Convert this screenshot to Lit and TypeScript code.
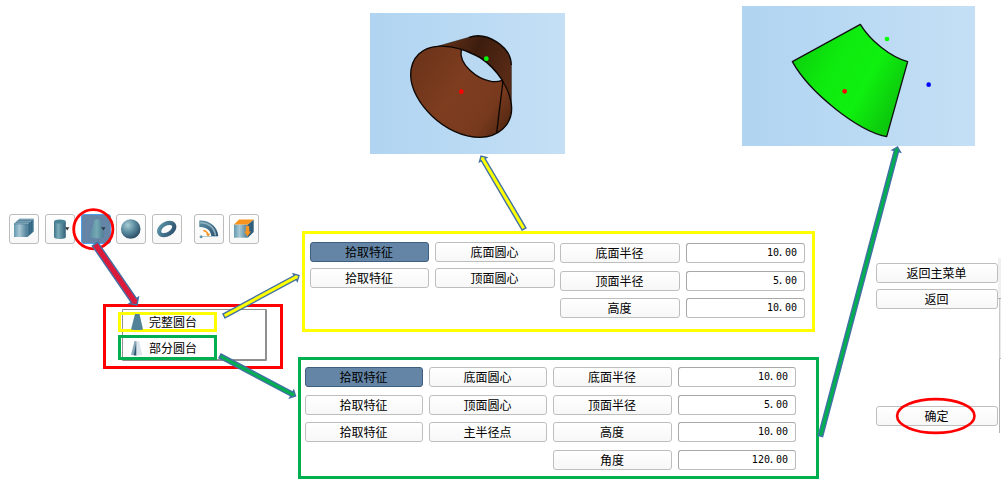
import { LitElement, html, css, svg } from "lit";
import { customElement, property } from "lit/decorators.js";

type Cell = { text: string; kind?: "active" | "value" };

/** Outline of a block arrow that runs from (x1,y1) to the tip (x2,y2). */
function arrowPoints(x1: number, y1: number, x2: number, y2: number, half: number, head: number): string {
  const len = Math.hypot(x2 - x1, y2 - y1);
  const ux = (x2 - x1) / len;
  const uy = (y2 - y1) / len;
  const at = (along: number, side: number) =>
    `${(x1 + ux * along - uy * side).toFixed(2)},${(y1 + uy * along + ux * side).toFixed(2)}`;
  const neck = len - head;
  return [at(0, half), at(neck, half), at(neck, head), at(len, 0), at(neck, -head), at(neck, -half), at(0, -half)].join(" ");
}

const icons: Record<string, unknown> = {
  box: svg`<path d="M5 10L10.5 5H24.7L18.5 10Z" fill="#8db4c5"/><path d="M5 10H18.5V23H5Z" fill="url(#g-light)"/><path d="M18.5 10L24.7 5V17.5L18.5 23Z" fill="#3f7590"/><path d="M7 8.2H20.7V20.8M9 6.6H22.6V19" fill="none" stroke="#2d5a76" stroke-width=".6"/><path d="M5 10H18.5V23M5 10L10.5 5H24.7" fill="none" stroke="#4a7a94" stroke-width=".6"/>`,
  cylinder: svg`<path d="M9 7.5V23C9 25.6 20.8 25.6 20.8 23V7.5Z" fill="url(#g-body)"/><ellipse cx="14.9" cy="7.5" rx="5.9" ry="2" fill="#4a8296"/><path d="M20 13.3H24.4L22.2 16.5Z" fill="#333"/>`,
  cone: svg`<path d="M13.5 5.8Q16.2 4.6 19 5.8L22.8 23Q16 25.6 9 23Z" fill="url(#g-cone)"/><path d="M20 13.3H24.6L22.4 16.5Z" fill="#2b3d4d"/>`,
  sphere: svg`<circle cx="14.7" cy="15" r="9.8" fill="url(#g-ball)"/>`,
  torus: svg`<g transform="rotate(-31 14.7 15)"><ellipse cx="14.7" cy="15" rx="8.2" ry="5.3" fill="none" stroke="url(#g-ring)" stroke-width="4.2"/></g>`,
  pipe: svg`<path d="M5.3 6.5C15 6 23.5 12 24.3 22H17.3C17 16.5 12 12.6 5.3 13Z" fill="url(#g-ring)"/><path d="M6 8.8C14 8.5 20.3 13 21.5 21.5" fill="none" stroke="#8fb0bf" stroke-width="1.6"/><path d="M9.3 16.4Q13.3 17 14.2 21" fill="none" stroke="#f7931e" stroke-width="1.5"/><path d="M12 19.8H16.2L14.2 22.8Z" fill="#f7931e"/><path d="M8 22.5H24" stroke="#9fbccb" stroke-width=".8"/><circle cx="7.1" cy="22.8" r="1.5" fill="#6798b3"/>`,
  extrude: svg`<path d="M5 10.5H18.8V23.7H5Z" fill="url(#g-light)"/><path d="M18.8 10.5L24.7 5.5V18L18.8 23.7Z" fill="#315f7b"/><path d="M5 10.5L10 5.5H24.7L18.8 10.5Z" fill="#f7931e"/><path d="M16.8 12H20.2V17.5H21.8L18.5 22.5L15.2 17.5H16.8Z" fill="#f7931e"/>`,
};

const gradients = svg`<defs>
  <linearGradient id="g-light"><stop offset="0" stop-color="#6399b1"/><stop offset=".4" stop-color="#a9c8d4"/><stop offset="1" stop-color="#477b94"/></linearGradient>
  <linearGradient id="g-body"><stop offset="0" stop-color="#3f7188"/><stop offset=".35" stop-color="#7badba"/><stop offset="1" stop-color="#315f78"/></linearGradient>
  <linearGradient id="g-cone"><stop offset="0" stop-color="#5a8fa2"/><stop offset=".5" stop-color="#76a9b4"/><stop offset="1" stop-color="#487c92"/></linearGradient>
  <linearGradient id="g-ring" x1="0" y1="0" x2="1" y2="1"><stop offset="0" stop-color="#5b93a8"/><stop offset="1" stop-color="#2d506f"/></linearGradient>
  <radialGradient id="g-ball" cx=".35" cy=".3" r=".75"><stop offset="0" stop-color="#a8ccd5"/><stop offset=".5" stop-color="#5b8b9f"/><stop offset="1" stop-color="#284962"/></radialGradient>
</defs>`;

@customElement("cad-button")
class CadButton extends LitElement {
  @property() kind = "";
  @property() text = "";

  static styles = css`
    :host { display: block; height: 20px; }
    .face {
      box-sizing: border-box; height: 20px; display: flex; align-items: center; justify-content: center;
      border: 1px solid #bebebe; border-radius: 3px; background: linear-gradient(#fff, #f7f7f7);
      font: 12px/18px "Noto Sans CJK SC", sans-serif; color: #000; white-space: nowrap; padding-right: 1px;
    }
    .active { background: #6485a6; border-color: #3f5f80; }
    .value {
      justify-content: flex-end; padding-right: 7px; background: #fff; border-color: #a8a8a8 #bdbdbd #bdbdbd #a8a8a8;
      font: 10px/18px "DejaVu Sans Mono", monospace;
    }
    .dot { margin: 0 1.5px 0 -1.5px; }
  `;

  render() {
    if (this.kind === "value") {
      const [whole, frac] = this.text.split(".");
      return html`<div class="face value"><span>${whole}</span><span class="dot">.</span><span>${frac}</span></div>`;
    }
    return html`<div class="face ${this.kind}">${this.text}</div>`;
  }
}

@customElement("tool-bar")
class ToolBar extends LitElement {
  static styles = css`
    :host { display: block; }
    .bar { display: flex; gap: 5.8px; }
    .tool {
      box-sizing: border-box; width: 30px; height: 30px; border: 1px solid #bcbcbc; border-radius: 3px;
      background: linear-gradient(#fff, #f8f8f8);
    }
    .tool svg { display: block; margin: -1px; }
    .selected { background: #6485a6; border-color: #4aa0ec; }
    .apart { margin-left: 5.7px; }
  `;
  render() {
    return html`<div class="bar">
      ${["box", "cylinder", "cone", "sphere", "torus", "pipe", "extrude"].map(
        (n) => html`<div class="tool ${n === "cone" ? "selected" : ""} ${n === "pipe" ? "apart" : ""}">
          <svg width="30" height="30" viewBox="0 0 30 30">${gradients}${icons[n]}</svg>
        </div>`
      )}
    </div>`;
  }
}

@customElement("app-root")
class AppRoot extends LitElement {
  static styles = css`
    :host { display: block; }
    .canvas { position: relative; width: 1008px; height: 486px; background: #fff; overflow: hidden; }
    .node { position: absolute; box-sizing: border-box; }
    .scene { background: linear-gradient(90deg, #b0d4f1, #c4dff5); }
    .scene svg { display: block; width: 100%; height: 100%; }
    .scene-full { left: 370px; top: 13px; width: 195px; height: 141px; }
    .scene-part { left: 742px; top: 6px; width: 233px; height: 140px; }
    .tools { left: 9px; top: 214px; }
    .menu { left: 103px; top: 304px; width: 180px; height: 65px; border: 3px solid #f00; padding: 2px 13px 5px 15px; }
    .list {
      box-sizing: border-box; width: 145px; height: 52px; border: solid #909090; border-width: 1px 2px 2px 1px;
      margin-left: 1px; padding: 2px 0; display: flex; flex-direction: column; gap: 3px; border-radius: 1px;
    }
    .item {
      box-sizing: border-box; width: 99px; height: 20px; margin-left: -5px; padding-left: 8px; border: 3px solid #ff0;
      display: flex; align-items: center; gap: 4px; font: 12px/14px "Noto Sans CJK SC", sans-serif; color: #000; flex: none;
    }
    .item svg { width: 16px; height: 16px; flex: none; }
    .item.part { border-color: #00b050; height: 25px; }
    .panel { display: flex; }
    .panel-full { left: 302px; top: 231px; width: 513px; height: 101px; border: 3px solid #ff0; padding: 8px 7px 0 5px; gap: 5px; }
    .panel-part { left: 298px; top: 357px; width: 521px; height: 122px; border: 3px solid #00b050; padding: 7px 20px 0 4px; }
    .grid { display: grid; align-content: start; }
    .picks { grid-template-columns: 119px 120px; gap: 5.5px 6px; }
    .sizes { grid-template-columns: 120px 119px; gap: 7.5px 6px; padding-top: 1px; }
    .part-grid { grid-template-columns: 118px 118px 119px 118px; gap: 7.7px 6px; }
    .side { left: 876px; top: 263px; width: 122px; height: 163px; display: flex; flex-direction: column; gap: 6px; }
    .last { margin-top: auto; }
    .edge { left: 998px; top: 258px; width: 3px; height: 175px; display: flex; flex-direction: column; }
    .e1 { height: 40px; background: #f0f0f0; border-bottom: 1px solid #b0b0b0; }
    .e2 { height: 59px; background: #e9e9e9; border-left: 1px solid #c8c8c8; border-bottom: 1px solid #bbb; margin-left: 1px; }
    .e3 { flex: 1; width: 1px; margin-left: 1px; background: #b4b4b4; }
    .marks { left: 0; top: 0; }
  `;

  fullPicks: Cell[] = [
    { text: "拾取特征", kind: "active" }, { text: "底面圆心" },
    { text: "拾取特征" }, { text: "顶面圆心" },
  ];
  fullSizes: Cell[] = [
    { text: "底面半径" }, { text: "10.00", kind: "value" },
    { text: "顶面半径" }, { text: "5.00", kind: "value" },
    { text: "高度" }, { text: "10.00", kind: "value" },
  ];
  partCells: (Cell | null)[] = [
    { text: "拾取特征", kind: "active" }, { text: "底面圆心" }, { text: "底面半径" }, { text: "10.00", kind: "value" },
    { text: "拾取特征" }, { text: "顶面圆心" }, { text: "顶面半径" }, { text: "5.00", kind: "value" },
    { text: "拾取特征" }, { text: "主半径点" }, { text: "高度" }, { text: "10.00", kind: "value" },
    null, null, { text: "角度" }, { text: "120.00", kind: "value" },
  ];

  cells(list: (Cell | null)[]) {
    return list.map((c) => (c ? html`<cad-button .text=${c.text} .kind=${c.kind ?? ""}></cad-button>` : html`<span></span>`));
  }

  arrow(x1: number, y1: number, x2: number, y2: number, fill: string, half = 2.2, head = 4.2) {
    return svg`<polygon points=${arrowPoints(x1, y1, x2, y2, half, head)} fill=${fill} stroke="#4270a4" stroke-width="1.4"/>`;
  }

  render() {
    return html`<div class="canvas">
      <div class="node scene scene-full">
        <svg viewBox="15 24 585 423" preserveAspectRatio="none">
          <defs>
            <linearGradient id="out" x1="0" y1="0" x2="1" y2=".5"><stop offset="0" stop-color="#6b341b"/><stop offset=".5" stop-color="#3d1d0e"/><stop offset="1" stop-color="#592b16"/></linearGradient>
            <linearGradient id="in" x1="0" y1=".2" x2="1" y2=".8"><stop offset="0" stop-color="#6c341a"/><stop offset=".45" stop-color="#7e3d1f"/><stop offset=".8" stop-color="#783a1e"/><stop offset="1" stop-color="#542812"/></linearGradient>
          </defs>
          <path d="M218 124L312 97C365 78 438 125 439 180V310L412 240L288 170Z" fill="url(#out)"/>
          <path d="M312 97C365 78 438 125 439 180" fill="none" stroke="#0c0704" stroke-width="4"/>
          <path d="M218 124L312 97M439 180V290" stroke="#3a2a24" stroke-width="2"/>
          <path d="M218 124C262 121 305 135 345 158C392 188 438 250 440 310C440 360 400 397 345 397C240 397 137 290 137 210C137 155 175 126 218 124Z" fill="url(#in)" stroke="#0c0704" stroke-width="4"/>
          <path d="M289 133C310 140 330 150 345 158C370 174 394 199 412 226C398 231 385 230 378 229C335 222 280 178 289 133Z" fill="#b9d9f3" stroke="#0c0704" stroke-width="4"/>
          <path d="M414 228L395 383" stroke="#0c0704" stroke-width="4"/>
          <circle cx="364" cy="161" r="7" fill="#0f0"/><circle cx="289" cy="260" r="7" fill="#f00"/>
        </svg>
      </div>
      <div class="node scene scene-part">
        <svg viewBox="21 18 699 420" preserveAspectRatio="none">
          <defs><linearGradient id="green" x1=".1" y1=".2" x2=".95" y2=".65"><stop offset="0" stop-color="#0cd40c"/><stop offset=".3" stop-color="#0eea0e"/><stop offset=".65" stop-color="#0ff00f"/><stop offset="1" stop-color="#0cc80c"/></linearGradient></defs>
          <path d="M376 73C406 122 465 170 518 185L455 410C370 393 225 280 172 185Z" fill="url(#green)" stroke="#111" stroke-width="4" stroke-linejoin="round"/>
          <circle cx="456" cy="117" r="7" fill="#0f0"/><circle cx="329" cy="274" r="7" fill="#f00"/><circle cx="581" cy="254" r="7" fill="#00f"/>
        </svg>
      </div>

      <tool-bar class="node tools"></tool-bar>

      <div class="node menu">
        <div class="list">
          <div class="item">
            <svg viewBox="0 0 16 16"><path d="M6 0H10.5L14 15.5Q8 17 2 15.5Z" fill="#528297"/></svg><span>完整圆台</span>
          </div>
          <div class="item part">
            <svg viewBox="0 0 16 16"><path d="M5.5 1H7.5V15.5L2 15Z" fill="#8ba9b9"/><path d="M7.5 1V15.5L4.8 15.2Z" fill="#2f5871"/><path d="M7.5 1H10L13.3 15L7.5 15.5Z" fill="#dde5ec"/></svg><span>部分圆台</span>
          </div>
        </div>
      </div>

      <div class="node panel panel-full">
        <div class="grid picks">${this.cells(this.fullPicks)}</div>
        <div class="grid sizes">${this.cells(this.fullSizes)}</div>
      </div>
      <div class="node panel panel-part">
        <div class="grid part-grid">${this.cells(this.partCells)}</div>
      </div>

      <div class="node side">
        <cad-button .text=${"返回主菜单"}></cad-button>
        <cad-button .text=${"返回"}></cad-button>
        <cad-button class="last" .text=${"确定"}></cad-button>
      </div>
      <div class="node edge"><div class="e1"></div><div class="e2"></div><div class="e3"></div></div>

      <svg class="node marks" width="1008" height="486" viewBox="0 0 1008 486">
        <ellipse cx="93.3" cy="229.2" rx="19.6" ry="19.6" fill="none" stroke="#f00" stroke-width="2.8"/>
        <ellipse cx="935.8" cy="416" rx="38.7" ry="16.9" fill="none" stroke="#f00" stroke-width="2.6"/>
        ${this.arrow(95, 244, 137, 305, "#dc1a3c", 3.3, 5.5)}
        ${this.arrow(524, 229, 481, 156, "#ff0")}
        ${this.arrow(224, 316, 299, 275.5, "#ff0")}
        ${this.arrow(220, 356, 295.5, 396, "#00b050")}
        ${this.arrow(820.5, 436, 897.5, 147, "#00b050")}
      </svg>
    </div>`;
  }
}
